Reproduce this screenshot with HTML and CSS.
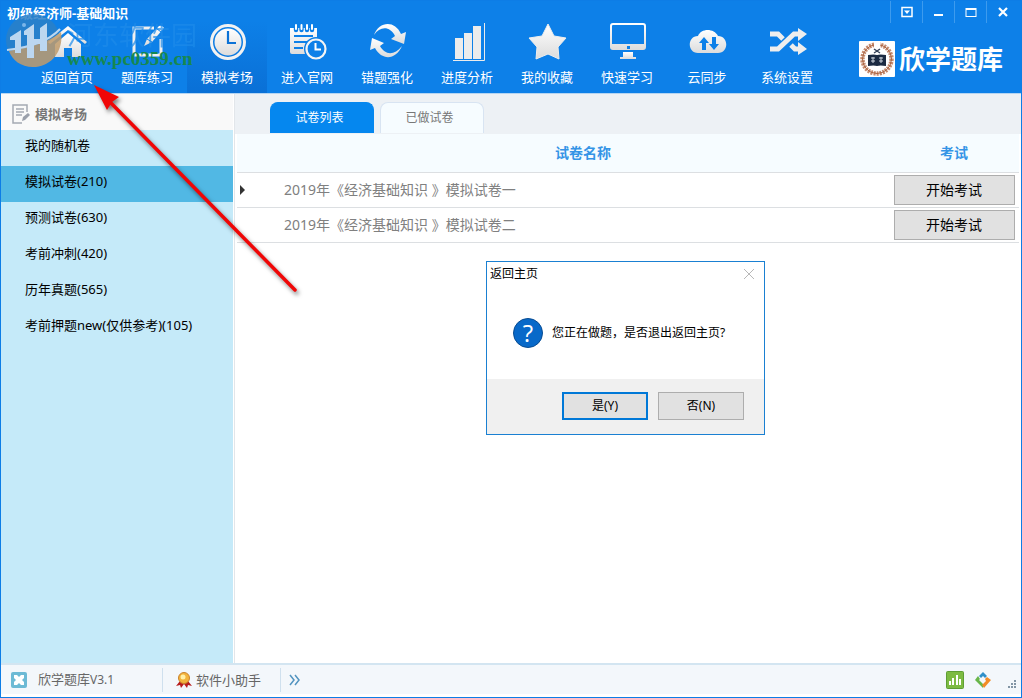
FILE: index.html
```html
<!DOCTYPE html>
<html lang="zh-CN">
<head>
<meta charset="utf-8">
<title>初级经济师-基础知识</title>
<link rel="stylesheet" href="styles.css">
</head>
<body>
<div class="window">
  <header class="header">
    <h1 class="title">初级经济师-基础知识</h1>
    <div class="controls">
      <button class="control" aria-label="菜单"><svg width="12" height="12" viewBox="0 0 12 12"><rect x="1" y="1.5" width="10" height="9" fill="none" stroke="#fff" stroke-width="1.5"/><path d="M3 4.5h6L6 8z" fill="#fff"/></svg></button>
      <button class="control" aria-label="最小化"><svg width="12" height="12" viewBox="0 0 12 12"><path d="M1 8h9v2H1z" fill="#fff"/></svg></button>
      <button class="control" aria-label="最大化"><svg width="12" height="12" viewBox="0 0 12 12"><path d="M.5 2h11v9H.5zM1.500 4v6h9V4z" fill="#fff" fill-rule="evenodd"/></svg></button>
      <button class="control" aria-label="关闭"><svg width="12" height="12" viewBox="0 0 12 12"><path d="M2 2l8 8M10 2l-8 8" stroke="#fff" stroke-width="2.200"/></svg></button>
    </div>
    <div class="header-row">
      <nav class="toolbar">
        <button class="tool"><svg class="tool-icon" viewBox="0 0 40 40"><path d="M1 20 21 4l19 16-2 2L21 8 3 22z" fill="url(#metal)"/><path d="m21 11 13 11v13h-9v-9h-8v9H8V22z" fill="url(#metal)"/></svg><span>返回首页</span></button>
        <button class="tool"><svg class="tool-icon" viewBox="0 0 40 40"><path d="M27 6H7v27h27V17" fill="none" stroke="#f0f0f0" stroke-width="3"/><path d="m17 24 3-7L32 4q3-1 5 2L25 20z" fill="url(#metal)"/><path d="m29 6 5 4M20 17l5 3" stroke="#0d80e8" stroke-width="1"/></svg><span>题库练习</span></button>
        <button class="tool tool-active"><svg class="tool-icon" viewBox="0 0 40 40"><circle cx="21" cy="20" r="16.500" fill="none" stroke="#f2f2f2" stroke-width="3"/><circle cx="21" cy="20" r="13.500" fill="url(#metal)"/><path d="M21 9v12h8" fill="none" stroke="#0b72d6" stroke-width="2.200"/></svg><span>模拟考场</span></button>
        <button class="tool"><svg class="tool-icon" viewBox="0 0 40 40"><path d="M3 6h27v17H20v9H5q-2 0-2-2z" fill="url(#metal)"/><path d="M9 3v5M14.500 3v5M20 3v5M25 3v5" stroke="#0d80e8" stroke-width="4.400" stroke-linecap="round"/><path d="M9 3v4M14.500 3v4M20 3v4M25 3v4" stroke="#fff" stroke-width="2" stroke-linecap="round"/><path d="M7 14h19M7 20h13M7 26h9" stroke="#0d80e8" stroke-width="2"/><circle cx="29" cy="27" r="12" fill="#0d80e8"/><circle cx="29" cy="27" r="9.500" fill="none" stroke="#f4f4f4" stroke-width="2.200"/><path d="M28.500 21v6.500H34" fill="none" stroke="#fff" stroke-width="2"/></svg><span>进入官网</span></button>
        <button class="tool"><svg class="tool-icon" viewBox="0 0 40 40"><path d="M7 13C12-1 28-2 34 12l5-2-2 12-13-5 4-3C23 4 13 4 7 13z" fill="url(#metal)"/><path d="M35 24C29 38 15 39 8 26l-5 2 2-12 12 5-4 3c5 9 14 10 22 0z" fill="url(#metal)"/></svg><span>错题强化</span></button>
        <button class="tool"><svg class="tool-icon" viewBox="0 0 40 40"><path d="M8 16h8v21H8zM17 11h8v26h-8zM26 4h8v33h-8z" fill="#ececec"/><path d="M6 38.500h31.500V1" fill="none" stroke="#ececec"/></svg><span>进度分析</span></button>
        <button class="tool"><svg class="tool-icon" viewBox="0 0 40 40"><path d="m21 2 6 12 12 2-8 9 1 12-11-5-12 5 1-12-8-9 13-2z" fill="url(#metal)" stroke="#eee" stroke-linejoin="round"/></svg><span>我的收藏</span></button>
        <button class="tool"><svg class="tool-icon" viewBox="0 0 40 40"><path fill-rule="evenodd" d="M6 1h30q3 0 3 3v21q0 3-3 3H6q-3 0-3-3V4q0-3 3-3zm0 2q-1 0-1 1v18h32V4q0-1-1-1zM20 24v3h3v-3z" fill="url(#metal)"/><path d="M16 30h10v5h3v2H13v-2h3z" fill="url(#metal)"/></svg><span>快速学习</span></button>
        <button class="tool"><svg class="tool-icon" viewBox="0 0 40 40"><path d="M11 31C0 31 0 14 11 14c3-8 16-8 20 0 11 0 11 17 0 17z" fill="url(#metal)"/><path d="m17 15 5 6h-3v7h-4v-7h-3zM25 15h4v7h3l-5 6-5-6h3z" fill="#0d80e8"/></svg><span>云同步</span></button>
        <button class="tool"><svg class="tool-icon" viewBox="0 0 40 40"><path d="M3 12h8l5 5M24 23l4 4h5M3 27h8L27 12h6" fill="none" stroke="#eee" stroke-width="5"/><path d="m31 6 9 6-9 7zM31 20l9 7-9 6z" fill="#eee"/></svg><span>系统设置</span></button>
      </nav>
      <div class="brand">
        <svg class="brand-mark" viewBox="0 0 36 36"><rect width="36" height="36" rx="1" fill="#fff"/><circle cx="18" cy="18" r="14.500" fill="none" stroke="#c58b70" stroke-width="4.500" stroke-dasharray="2 1"/><circle cx="18" cy="18" r="14.500" fill="none" stroke="#a9623f" stroke-width="1"/><path d="M15 0h6v7h-6z" fill="#fff"/><path d="m15 8 6 4m0-4-6 4" stroke="#334057" stroke-width="1.500"/><path d="M9 14q6-1 9 0 3-1 9 0v11q-6-1-9 0-3-1-9 0z" fill="#1b2a42"/><path d="M12 17h4m-2-1v6m-2-2h4M20 17h4m-2-1v6m-2-2h4" stroke="#cdd4dd"/></svg>
        <span class="brand-name">欣学题库</span>
      </div>
    </div>
    <div class="watermark">
      <svg class="watermark-mark" viewBox="0 0 58 56"><ellipse cx="28" cy="27" rx="27" ry="26" fill="#2b80c8"/><path d="M4 38C20 34 40 32 56 19 59 38 46 54 28 54 16 54 7 47 4 38z" fill="#c09c6c"/><path d="m5 24 11-7v23h-6V27H5zM19 18l10-7v15h6V15l7-5v28h-7v-7h-6v14h-7V22h-3z" fill="#dbe7f2"/><path d="M2 37C20 35 42 30 55 16" fill="none" stroke="#dbe7f2" stroke-width="2"/><circle cx="19" cy="12" r="2" fill="#8fc0ea"/></svg>
      <span class="watermark-name">河东软件园</span>
      <span class="watermark-site">www.pc0359.cn</span>
    </div>
  </header>

  <div class="body">
    <aside class="sidebar">
      <h2 class="sidebar-title"><svg width="18" height="20" viewBox="0 0 18 20"><path d="M15 8V1H1v18h9" fill="none" stroke="#a4a9b2" stroke-width="1.500"/><path d="M4 5h8M4 8h8M4 11h6" stroke="#a4a9b2" stroke-width="1.500"/><path d="m10 17 1-4 5-4 2 2-5 5z" fill="#9aa0ab"/></svg>模拟考场</h2>
      <nav class="menu">
        <a class="menu-item" href="#">我的随机卷</a>
        <a class="menu-item menu-item-active" href="#">模拟试卷(210)</a>
        <a class="menu-item" href="#">预测试卷(630)</a>
        <a class="menu-item" href="#">考前冲刺(420)</a>
        <a class="menu-item" href="#">历年真题(565)</a>
        <a class="menu-item" href="#">考前押题new(仅供参考)(105)</a>
      </nav>
    </aside>
    <main class="main">
      <div class="tabs">
        <button class="tab tab-active">试卷列表</button>
        <button class="tab">已做试卷</button>
      </div>
      <table class="papers">
        <thead><tr><th class="col-mark"></th><th>试卷名称</th><th class="col-exam">考试</th></tr></thead>
        <tbody>
          <tr><td class="col-mark"><svg width="5" height="10" viewBox="0 0 5 10"><path d="M0 0l5 5-5 5z" fill="#333"/></svg></td><td class="paper-name">2019年《经济基础知识 》模拟试卷一</td><td class="col-exam"><button class="start">开始考试</button></td></tr>
          <tr><td class="col-mark"></td><td class="paper-name">2019年《经济基础知识 》模拟试卷二</td><td class="col-exam"><button class="start">开始考试</button></td></tr>
        </tbody>
      </table>
    </main>
  </div>

  <footer class="status">
    <div class="status-cell status-version"><svg width="16" height="16" viewBox="0 0 16 16"><rect width="16" height="16" rx="2" fill="#6dbad5"/><path d="M3 3h3l2 2 2-2h3v3l-2 2 2 2v3h-3l-2-2-2 2H3v-3l2-2-2-2z" fill="#fff"/></svg><span>欣学题库<span class="version">V3.1</span></span></div>
    <div class="status-cell status-helper"><svg width="16" height="16" viewBox="0 0 16 16"><path d="m4 9-4 5 4-1 1 3 3-4 3 4 1-3 4 1-4-5z" fill="#b71c1c"/><circle cx="8" cy="6" r="5.500" fill="#f3b43c" stroke="#c9822b"/><circle cx="7" cy="5" r="2.500" fill="#fff0a8"/></svg>软件小助手</div>
    <button class="status-more" aria-label="更多"><svg width="11" height="12" viewBox="0 0 11 12"><path d="m1 1 4 5-4 5M6 1l4 5-4 5" fill="none" stroke="#5294c0" stroke-width="1.500"/></svg></button>
    <div class="status-tray">
      <svg width="18" height="18" viewBox="0 0 18 18"><rect x=".5" y=".5" width="17" height="17" rx="1" fill="#7dbb42" stroke="#5e9e34"/><path d="M3 10h2v4H3zM6 7h2v7H6zM10 4h2v10h-2zM13 8h2v6h-2z" fill="#fff"/></svg>
      <svg width="16" height="16" viewBox="0 0 16 16"><path d="m4 4 4-4 4 4-2 2-2-2-2 2z" fill="#2f8fc9"/><path d="m3 4 2 3-1 1 4 4v4L0 8z" fill="#69b64a"/><path d="m12 5 4 3-7 8-2-3 4-4-1-2z" fill="#f28c28"/></svg>
      <svg class="grip" width="9" height="9" viewBox="0 0 9 9"><path d="M6 0h2v2H6zM3 3h2v2H3zM6 3h2v2H6zM0 6h2v2H0zM3 6h2v2H3zM6 6h2v2H6z" fill="#8295a5"/></svg>
    </div>
  </footer>

  <section class="dialog" role="dialog" aria-labelledby="dialog-title">
    <div class="dialog-head"><h2 class="dialog-title" id="dialog-title">返回主页</h2><button class="dialog-close" aria-label="关闭"><svg width="12" height="12" viewBox="0 0 12 12"><path d="m1 1 10 10M11 1 1 11" stroke="#b8b8b8"/></svg></button></div>
    <div class="dialog-body"><span class="question">?</span><p class="dialog-text">您正在做题，是否退出返回主页?</p></div>
    <div class="dialog-actions"><button class="choice choice-default">是(Y)</button><button class="choice">否(N)</button></div>
  </section>

  <svg class="arrow" width="220" height="220" viewBox="0 0 220 220"><path d="M202 206 16 17" stroke="#f00606" stroke-width="3.500" stroke-linecap="round"/><path d="m1 1 25 12-7 5-5 8z" fill="#f00606"/></svg>
</div>
<svg class="defs" aria-hidden="true"><defs><linearGradient id="metal" x1="0" y1="0" x2="0" y2="1"><stop offset="0" stop-color="#fff"/><stop offset="1" stop-color="#dcdcdc"/></linearGradient></defs></svg>
</body>
</html>
```
FILE: styles.css
```css
* { box-sizing: border-box; }
body {
  margin: 0;
  font: 13px/18px "Noto Sans", "Noto Sans CJK SC", sans-serif;
  color: #000;
}
button { font: inherit; color: inherit; padding: 0; border: 0; background: none; }
h1, h2, p { margin: 0; }
.defs { position: absolute; width: 0; height: 0; }
.window {
  position: relative;
  display: flex;
  flex-direction: column;
  min-height: 100vh;
  border: 1px solid #0d7de6;
  background: #fff;
  overflow: hidden;
}

.header { position: relative; background: #0d80e8; border-bottom: 1px solid #b5d5f2; }
.title { padding: 4px 6px 0; font-size: 13px; line-height: 16px; color: #fff; }
.controls { position: absolute; top: 0; right: 3px; display: flex; }
.control {
  width: 32px;
  height: 22px;
  display: grid;
  place-items: center;
  border-left: 1px solid #3d9bee;
}
.header-row { display: flex; justify-content: space-between; }
.toolbar { display: flex; padding-left: 26px; }
.tool {
  width: 80px;
  height: 72px;
  display: flex;
  flex-direction: column;
  align-items: center;
  gap: 6px;
  color: #fff;
}
.tool-active { background: linear-gradient(#0d80e8, #0a70d6); }
.tool-icon { width: 40px; height: 40px; margin-top: 1px; }
.brand { display: flex; align-items: center; gap: 4px; padding: 4px 18px 0 0; color: #fff; }
.brand-mark { width: 36px; height: 36px; }
.brand-name { font-size: 26px; line-height: 36px; font-weight: 700; }

.watermark {
  position: absolute;
  top: 12px;
  left: 4px;
  display: grid;
  grid-template-columns: 62px auto;
  align-content: start;
  pointer-events: none;
}
.watermark-mark { width: 58px; height: 56px; grid-row: 1 / 3; opacity: .85; }
.watermark-name { padding-top: 9px; font-size: 26px; line-height: 26px; color: #1d8bea; opacity: .7; }
.watermark-site { font: bold 19px/20px "Liberation Serif", serif; color: #17884f; }

.body { flex: 1; display: flex; }
.sidebar { width: 232px; background: #c5eaf9; }
.sidebar-title {
  display: flex;
  align-items: center;
  gap: 5px;
  height: 36px;
  padding: 4px 0 0 11px;
  font-size: 13px;
  color: #777;
  background: #f9f9f9;
}
.menu-item {
  display: block;
  height: 36px;
  padding: 6px 24px 0;
  color: #000;
  text-decoration: none;
  white-space: nowrap;
}
.menu-item-active { background: #51b8e4; }
.main { flex: 1; border-left: 1px solid #e2e6ea; margin-left: 1px; }
.tabs { display: flex; gap: 6px; height: 40px; padding: 8px 0 0 35px; background: #edf1f5; }
.tab {
  width: 104px;
  height: 31px;
  padding-right: 5px;
  border: 1px solid #d8e4f2;
  border-bottom: 0;
  border-radius: 8px 8px 0 0;
  font-size: 12px;
  color: #777;
  background: #f6fcff;
}
.tab-active { color: #fff; background: #0587ef; border-color: #0587ef; }
.papers { width: 100%; padding: 0 2px; border-collapse: separate; border-spacing: 0; table-layout: fixed; }
.papers th, .papers td { padding: 0; border-bottom: 1px solid #dcdfe2; }
.papers th { height: 39px; font-size: 14px; color: #3494e6; background: #f6fcff; }
.papers td { height: 35px; }
.papers .col-mark { width: 40px; padding-left: 3px; }
.papers .col-exam { width: 130px; text-align: center; }
.papers .paper-name { padding-left: 7px; font-size: 14px; color: #808080; }
.start { width: 121px; height: 30px; border: 1px solid #adadad; background: #e1e1e1; font-size: 14px; }

.status {
  display: flex;
  align-items: center;
  height: 34px;
  border-top: 2px solid #d3e5f1;
  border-bottom: 3px solid #fff;
  color: #666;
  background: #f3f7fb;
}
.status-cell { display: flex; align-items: center; height: 24px; border-right: 1px solid #cfe0ee; }
.status-version { width: 162px; padding-left: 10px; gap: 11px; }
.version { font-size: 12px; }
.status-helper { width: 118px; padding-left: 13px; gap: 4px; }
.status-more { display: flex; padding-left: 8px; }
.status-tray { display: flex; align-items: center; gap: 11px; margin-left: auto; padding-right: 4px; }
.grip { align-self: flex-end; margin-left: 6px; }

.dialog {
  position: absolute;
  top: 260px;
  left: 485px;
  width: 279px;
  border: 1px solid #1a80d2;
  background: #fff;
  font-size: 12px;
}
.dialog-head { display: flex; justify-content: space-between; align-items: center; height: 24px; padding: 0 9px 0 3px; }
.dialog-title { font-size: 12px; font-weight: 400; }
.dialog-close { display: flex; }
.dialog-body { display: flex; align-items: center; gap: 9px; height: 93px; padding: 0 26px; }
.question {
  width: 30px;
  height: 30px;
  border: 1px solid #084c92;
  border-radius: 50%;
  background: #0869c9;
  color: #fff;
  font: 24px/28px "Open Sans", sans-serif;
  text-align: center;
}
.dialog-text { white-space: nowrap; }
.dialog-actions { display: flex; justify-content: flex-end; gap: 10px; padding: 13px 20px 14px; background: #f0f0f0; }
.choice { width: 86px; height: 28px; border: 1px solid #adadad; background: #e1e1e1; }
.choice-default { border: 2px solid #0078d7; }

.arrow { position: absolute; left: 92px; top: 83px; filter: drop-shadow(2px 3px 2px rgba(0, 0, 0, .5)); pointer-events: none; }
```
